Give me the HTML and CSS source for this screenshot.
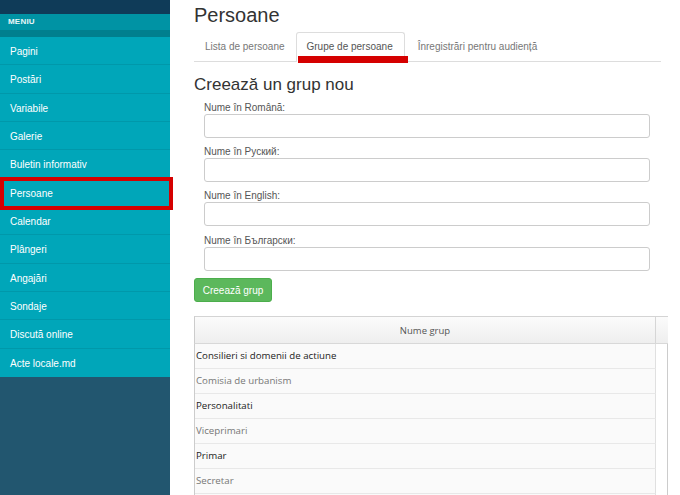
FILE: index.html
```html
<!DOCTYPE html>
<html>
<head>
<meta charset="utf-8">
<link rel="stylesheet" href="styles.css">
</head>
<body>
<aside class="sidebar">
  <div class="topbar"></div>
  <div class="menu-title">MENIU</div>
  <div class="menu-strip"></div>
  <ul class="menu">
    <li>Pagini</li>
    <li>Postări</li>
    <li>Variabile</li>
    <li>Galerie</li>
    <li>Buletin informativ</li>
    <li class="highlight">Persoane<span class="mark-box"></span></li>
    <li>Calendar</li>
    <li>Plângeri</li>
    <li>Angajări</li>
    <li>Sondaje</li>
    <li>Discută online</li>
    <li>Acte locale.md</li>
  </ul>
  <div class="sidebar-fill"></div>
</aside>
<main class="main">
  <h1 class="title">Persoane</h1>
  <ul class="tabs">
    <li class="tab first">Lista de persoane</li>
    <li class="tab active">Grupe de persoane<span class="mark-line"></span></li>
    <li class="tab">Înregistrări pentru audiență</li>
  </ul>
  <h2 class="subtitle">Creează un grup nou</h2>
  <form class="form">
    <div class="group"><label>Nume în Română:</label><div class="input"></div></div>
    <div class="group"><label>Nume în Руский:</label><div class="input"></div></div>
    <div class="group"><label>Nume în English:</label><div class="input"></div></div>
    <div class="group"><label>Nume în Български:</label><div class="input"></div></div>
  </form>
  <div class="btn">Creează grup</div>
  <div class="grid">
    <div class="grid-head">
      <div class="head-cell">Nume grup</div>
      <div class="head-spacer"></div>
    </div>
    <div class="grid-body">
      <div class="row dark">Consilieri si domenii de actiune</div>
      <div class="row light">Comisia de urbanism</div>
      <div class="row dark">Personalitati</div>
      <div class="row light">Viceprimari</div>
      <div class="row dark">Primar</div>
      <div class="row light">Secretar</div>
      <div class="row light"></div>
    </div>
  </div>
</main>
</body>
</html>
```
FILE: styles.css
```css
* { box-sizing: border-box; }
html, body { margin: 0; padding: 0; }
body {
  width: 680px;
  height: 495px;
  overflow: hidden;
  display: flex;
  font-family: "Liberation Sans", Arial, sans-serif;
  background: #fff;
  color: #333;
}
.sidebar {
  width: 170px;
  flex: none;
  display: flex;
  flex-direction: column;
  height: 495px;
  background: #22566f;
}
.topbar { height: 14px; background: #0f3b58; }
.menu-title {
  height: 16px;
  background: #0093a4;
  color: #e8f6f8;
  font-size: 8px;
  font-weight: bold;
  padding-left: 8px;
  line-height: 15px;
  letter-spacing: 0.2px;
}
.menu-strip { height: 7px; background: #007f8e; }
.menu { list-style: none; margin: 0; padding: 0; background: #00a6b9; }
.menu li {
  position: relative;
  height: 28.33px;
  line-height: 28px;
  padding: 1px 0 0 10px;
  font-size: 10px;
  color: #fff;
  border-bottom: 1px solid #0098aa;
}
.menu li:last-child { border-bottom: none; }
.mark-box {
  position: absolute;
  left: 0;
  top: -2px;
  right: -3px;
  bottom: -4px;
  border: 4px solid #d50000;
}
.sidebar-fill { flex: 1; background: #22566f; }

.main { flex: 1; padding-left: 24px; }
.title {
  margin: 3px 0 0;
  font-size: 20px;
  font-weight: normal;
  line-height: 24px;
  color: #333;
}
.tabs {
  list-style: none;
  margin: 5px 0 0;
  padding: 0;
  width: 467px;
  display: flex;
  border-bottom: 1px solid #ddd;
  height: 30px;
}
.tab {
  position: relative;
  height: 29px;
  padding: 0 10px;
  margin-right: 2px;
  line-height: 28px;
  font-size: 10px;
  color: #777;
  border: 1px solid transparent;
  border-bottom: none;
  border-radius: 3px 3px 0 0;
}
.tab.first { margin-left: 0; padding-right: 8px; }
.tab.active {
  color: #555;
  background: #fff;
  border-color: #ddd;
  height: 30px;
  padding: 0 11px 0 10px;
}
.mark-line {
  position: absolute;
  left: 1px;
  width: 110px;
  top: 23px;
  height: 7px;
  background: #d50000;
}
.subtitle {
  margin: 13px 0 0;
  font-size: 17px;
  font-weight: normal;
  line-height: 20px;
  color: #333;
}
.form { margin: 6px 0 0 10px; }
.group { height: 44.2px; }
.group label {
  display: block;
  font-size: 10px;
  line-height: 13px;
  color: #555;
}
.input {
  width: 446px;
  height: 24px;
  border: 1px solid #ccc;
  border-radius: 3px;
  background: #fff;
}
.btn {
  margin-top: 0;
  width: 78px;
  height: 24px;
  line-height: 23px;
  text-align: center;
  font-size: 10px;
  color: #fff;
  background: #5cb85c;
  border: 1px solid #4cae4c;
  border-radius: 3px;
}
.grid {
  margin-top: 14px;
  width: 474px;
}
.grid-head {
  display: flex;
  height: 28px;
  border-top: 1px solid #d4d4d4;
  border-left: 1px solid #ccc;
  border-bottom: 1px solid #d8d8d8;
  background: linear-gradient(#fbfbfb, #eeeeee);
}
.head-cell {
  width: 461px;
  border-right: 1px solid #d6d6d6;
  text-align: center;
  font-family: "Open Sans", "DejaVu Sans", sans-serif;
  font-size: 9.5px;
  line-height: 27px;
  color: #555;
}
.head-spacer { flex: 1; }
.grid-body {
  width: 474px;
  border-left: 1px solid #ccc;
  border-right: 1px solid #ccc;
  padding-right: 11px;
}
.row {
  height: 25px;
  line-height: 24px;
  border-bottom: 1px solid #e8e8e8;
  border-right: 1px solid #e0e0e0;
  background: #fafafa;
  font-family: "Open Sans", "DejaVu Sans", sans-serif;
  font-size: 9.7px;
  padding-left: 1px;
}
.row.dark { color: #222; }
.row.light { color: #777; }
```
